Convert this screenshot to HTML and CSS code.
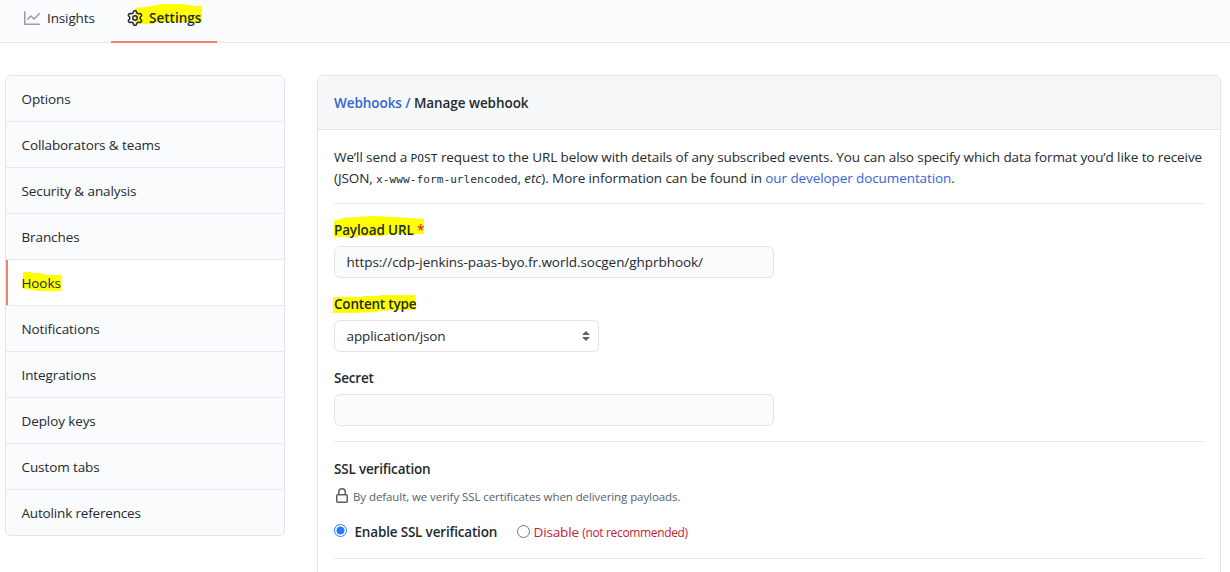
FILE: index.html
```html
<!DOCTYPE html>
<html lang="en">
<head>
<meta charset="utf-8">
<title>Manage webhook</title>
<link rel="stylesheet" href="styles.css">
</head>
<body>
<nav class="tabs">
  <a class="tab tab-insights"><svg class="icon icon-muted" width="16" height="16" viewBox="0 0 16 16"><path fill-rule="evenodd" d="M1.5 1.75a.75.75 0 00-1.5 0v12.5c0 .414.336.75.75.75h14.5a.75.75 0 000-1.5H1.5V1.75zm14.28 2.53a.75.75 0 00-1.06-1.06L10 7.94 7.53 5.47a.75.75 0 00-1.06 0L3.22 8.72a.75.75 0 001.06 1.06L7 7.06l2.47 2.47a.75.75 0 001.06 0l5.25-5.25z"/></svg><span>Insights</span></a>
  <a class="tab tab-active"><svg class="mark mark-settings" width="68" height="22" viewBox="0 0 68 22"><path d="M0 4L10 3L22 1L24 0H47L60 2H67V18H18V20H0Z"/></svg><svg class="icon" width="16" height="16" viewBox="0 0 16 16"><path fill-rule="evenodd" d="M7.429 1.525a6.593 6.593 0 011.142 0c.036.003.108.036.137.146l.289 1.105c.147.56.55.967.997 1.189.174.086.341.183.501.29.417.278.97.423 1.53.27l1.102-.303c.11-.03.175.016.195.046.219.31.41.641.573.989.014.031.022.11-.059.19l-.815.806c-.411.406-.562.957-.53 1.456a4.588 4.588 0 010 .582c-.032.499.119 1.05.53 1.456l.815.806c.08.08.073.159.059.19a6.494 6.494 0 01-.573.99c-.02.029-.086.074-.195.045l-1.103-.303c-.559-.153-1.112-.008-1.529.27-.16.107-.327.204-.5.29-.449.222-.851.628-.998 1.189l-.289 1.105c-.029.11-.101.143-.137.146a6.613 6.613 0 01-1.142 0c-.036-.003-.108-.037-.137-.146l-.289-1.105c-.147-.56-.55-.967-.997-1.189a4.502 4.502 0 01-.501-.29c-.417-.278-.97-.423-1.53-.27l-1.102.303c-.11.03-.175-.016-.195-.046a6.492 6.492 0 01-.573-.989c-.014-.031-.022-.11.059-.19l.815-.806c.411-.406.562-.957.53-1.456a4.587 4.587 0 010-.582c.032-.499-.119-1.05-.53-1.456l-.815-.806c-.08-.08-.073-.159-.059-.19a6.44 6.44 0 01.573-.99c.02-.029.086-.075.195-.045l1.103.303c.559.153 1.112.008 1.529-.27.16-.107.327-.204.5-.29.449-.222.851-.628.998-1.189l.289-1.105c.029-.11.101-.143.137-.146zM8 0c-.236 0-.47.01-.701.03-.743.065-1.29.615-1.458 1.261l-.29 1.106c-.017.066-.078.158-.211.224a5.994 5.994 0 00-.668.386c-.123.082-.233.09-.3.071L3.27 2.776c-.644-.177-1.392.02-1.82.63a7.977 7.977 0 00-.704 1.217c-.315.675-.111 1.422.363 1.891l.815.806c.05.048.098.147.088.294a6.084 6.084 0 000 .772c.01.147-.038.246-.088.294l-.815.806c-.474.469-.678 1.216-.363 1.891.2.428.436.835.704 1.218.428.609 1.176.806 1.82.63l1.103-.303c.066-.019.176-.011.299.071.213.143.436.272.668.386.133.066.194.158.212.224l.289 1.106c.169.646.715 1.196 1.458 1.26a8.094 8.094 0 001.402 0c.743-.064 1.29-.614 1.458-1.26l.29-1.106c.017-.066.078-.158.211-.224a5.98 5.98 0 00.668-.386c.123-.082.233-.09.3-.071l1.102.302c.644.177 1.392-.02 1.82-.63.268-.382.505-.789.704-1.217.315-.675.111-1.422-.364-1.891l-.814-.806c-.05-.048-.098-.147-.088-.294a6.1 6.1 0 000-.772c-.01-.147.039-.246.088-.294l.814-.806c.475-.469.679-1.216.364-1.891a7.992 7.992 0 00-.704-1.218c-.428-.609-1.176-.806-1.82-.63l-1.103.303c-.066.019-.176.011-.299-.071a5.991 5.991 0 00-.668-.386c-.133-.066-.194-.158-.212-.224L10.16 1.29C9.99.645 9.444.095 8.701.031A8.094 8.094 0 008 0zm1.5 8a1.5 1.5 0 11-3 0 1.5 1.5 0 013 0zM11 8a3 3 0 11-6 0 3 3 0 016 0z"/></svg><span>Settings</span></a>
</nav>
<div class="layout">
  <aside class="menu">
    <a class="item">Options</a>
    <a class="item">Collaborators &amp; teams</a>
    <a class="item">Security &amp; analysis</a>
    <a class="item">Branches</a>
    <a class="item item-active"><svg class="mark mark-hooks" width="40" height="20" viewBox="0 0 40 20"><path d="M1 0H10V1H19V2H24V3H39V19H15V18H8V17H1Z"/></svg><span>Hooks</span></a>
    <a class="item">Notifications</a>
    <a class="item">Integrations</a>
    <a class="item">Deploy keys</a>
    <a class="item">Custom tabs</a>
    <a class="item">Autolink references</a>
  </aside>
  <main class="panel">
    <h2 class="panel-head"><a class="link">Webhooks /</a> Manage webhook</h2>
    <div class="panel-body">
      <p class="intro"><span>We’ll send a <code>POST</code> request to the URL below with details of any subscribed events. You can also specify which data format you’d like to receive</span><br><span>(JSON, <code>x-www-form-urlencoded</code>, <em>etc</em>). More information can be found in <a class="link">our developer documentation</a>.</span></p>
      <form class="form">
        <label class="label"><svg class="mark mark-url" width="92" height="22" viewBox="0 0 92 22"><path d="M0 5L9 2L22 1L40 0L60 1L76 2L90 3V18H62V19H49V20H24V21H0Z"/></svg><span>Payload URL <span class="required">*</span></span></label>
        <div class="field">https://cdp-jenkins-paas-byo.fr.world.socgen/ghprbhook/</div>
        <label class="label label-type"><svg class="mark mark-type" width="84" height="20" viewBox="0 0 84 20"><path d="M0 2H30V1H46V0H83V15H68L45 16V17L20 18H0Z"/></svg><span>Content type</span></label>
        <div class="field select"><span>application/json</span><svg class="arrows" width="8" height="10" viewBox="0 0 8 10"><path d="M4 0L8 4H0ZM0 6H8L4 10Z"/></svg></div>
        <label class="label label-secret">Secret</label>
        <div class="field"></div>
        <section class="ssl">
          <h3 class="ssl-title">SSL verification</h3>
          <p class="note"><svg class="icon" width="16" height="16" viewBox="0 0 16 16"><path fill-rule="evenodd" d="M4 4v2h-.25A1.75 1.75 0 002 7.75v5.5c0 .966.784 1.75 1.75 1.75h8.5A1.75 1.75 0 0014 13.25v-5.5A1.75 1.75 0 0012.25 6H12V4a4 4 0 10-8 0zm6.5 2V4a2.5 2.5 0 10-5 0v2h5zM12 7.5h.25a.25.25 0 01.25.25v5.5a.25.25 0 01-.25.25h-8.5a.25.25 0 01-.25-.25v-5.5a.25.25 0 01.25-.25H12z"/></svg><span>By default, we verify SSL certificates when delivering payloads.</span></p>
          <div class="choices">
            <span class="radio radio-on"></span><b class="enable">Enable SSL verification</b>
            <span class="radio radio-off"></span><span class="disable">Disable <small>(not recommended)</small></span>
          </div>
        </section>
      </form>
    </div>
  </main>
</div>
</body>
</html>
```
FILE: styles.css
```css
* { box-sizing: border-box; }
body { margin: 0; height: 572px; overflow: hidden; background: #fff; color: #24292e; font: 13.5px/21px "Open Sans", "Noto Sans", sans-serif; white-space: nowrap; }
h2, h3, p { margin: 0; font-size: inherit; }
svg { display: block; flex: none; }
.icon { fill: currentColor; }
.icon-muted { color: #959da5; }
.link { color: #3565d0; }
.mark { position: absolute; fill: #ff0; z-index: 0; }
.mark ~ * { position: relative; }
.tabs { display: flex; height: 43px; background: #fafbfc; border-bottom: 1px solid #e4e7ea; }
.tab { display: flex; gap: 7px; height: 43px; padding-top: 8px; line-height: 20px; position: relative; }
.tab .icon { margin-top: 2px; }
.tab-insights { width: 111px; padding-left: 24px; letter-spacing: -0.12px; }
.tab-active { width: 106px; padding-left: 16px; gap: 6px; border-bottom: 2px solid #f08072; font-weight: 600; }
.mark-settings { left: 24px; top: 4px; }
.layout { display: flex; align-items: flex-start; gap: 32px; padding: 32px 0 0 5px; }
.menu { width: 280px; border: 1px solid #e1e4e8; border-radius: 6px; overflow: hidden; background: #fafbfc; }
.item { display: block; position: relative; height: 46px; padding: 13px 15.5px; border-bottom: 1px solid #e7eaed; letter-spacing: -0.1px; }
.item:last-child { height: 45px; border-bottom: 0; letter-spacing: -0.17px; }
.item-active { background: #fff; }
.item-active::before { content: ""; position: absolute; left: 0; top: 0; width: 2px; height: 45px; background: #ef8372; }
.mark-hooks { left: 16px; top: 12px; }
.panel { width: 904px; height: 520px; border: 1px solid #e1e4e8; border-radius: 6px 6px 0 0; overflow: hidden; }
.panel-head { height: 54px; padding: 17px 16px; background: #f6f8fa; border-bottom: 1px solid #e1e4e8; font-weight: 600; letter-spacing: -0.06px; }
.panel-body { padding: 17px 16px; }
.intro { height: 57px; border-bottom: 1px solid #e7eaed; margin-bottom: 15px; width: 870px; letter-spacing: -0.09px; }
code { font: 11.2px "DejaVu Sans Mono", monospace; letter-spacing: 0; }
.form { display: flex; flex-direction: column; width: 870px; }
.label { position: relative; height: 21px; margin-top: 1px; margin-bottom: 5px; font-weight: 600; letter-spacing: -0.13px; }
.label-type, .label-secret { letter-spacing: -0.2px; }
.required { color: #d9362b; }
.mark-url { left: 0; top: -4px; }
.mark-type { left: -1px; top: 1px; }
.field { display: flex; align-items: center; width: 440px; height: 32px; margin-bottom: 15px; padding: 0 11.5px; border: 1px solid #e1e4e8; border-radius: 6px; background: #fafbfc; letter-spacing: -0.05px; }
.select { width: 265px; padding-right: 8px; justify-content: space-between; background: #fff; letter-spacing: -0.1px; }
.arrows { fill: #586069; }
.ssl { border-top: 1px solid #e7eaed; border-bottom: 1px solid #e7eaed; height: 118px; padding-top: 17px; }
.ssl-title { font-weight: 600; letter-spacing: -0.18px; }
.note { display: flex; gap: 3px; margin-top: 7px; color: #586069; font-size: 11.5px; line-height: 20px; letter-spacing: -0.08px; }
.note .icon { margin-top: 1px; }
.choices { display: flex; margin-top: 15px; height: 21px; }
.radio { width: 13px; height: 13px; margin-top: 3px; border: 1px solid #767676; border-radius: 50%; }
.radio-on { margin-top: 2px; border-color: #2878ff; background: radial-gradient(circle, #2878ff 3.6px, #fff 4.4px); }
.enable { width: 162px; margin-left: 7.5px; font-weight: 600; letter-spacing: -0.18px; }
.disable { margin-left: 4px; color: #c02536; letter-spacing: -0.15px; }
small { font-size: 12px; letter-spacing: -0.34px; }
```
